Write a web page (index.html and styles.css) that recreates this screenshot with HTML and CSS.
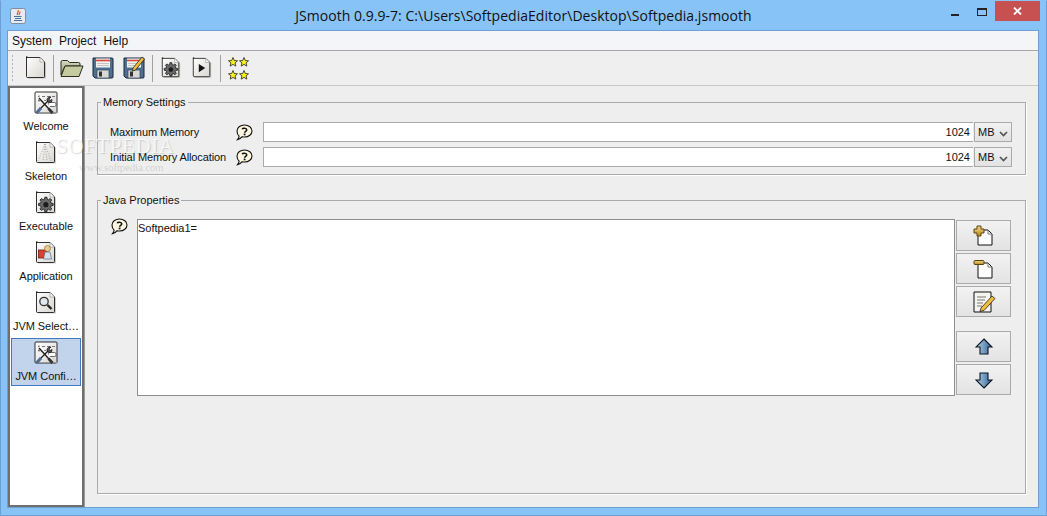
FILE: index.html
```html
<!DOCTYPE html>
<html lang="en">
<head>
<meta charset="utf-8">
<title>JSmooth</title>
<link rel="stylesheet" href="styles.css">
</head>
<body>
<svg class="defs" aria-hidden="true">
  <defs>
    <linearGradient id="paper" x1="0" y1="0" x2="1" y2="1"><stop offset="0" stop-color="#ffffff"/><stop offset="1" stop-color="#d8d6d0"/></linearGradient>
    <linearGradient id="steel" x1="0" y1="0" x2="1" y2="0"><stop offset="0" stop-color="#b9d2e8"/><stop offset="1" stop-color="#2f6399"/></linearGradient>
    <linearGradient id="gold" x1="0" y1="0" x2="0" y2="1"><stop offset="0" stop-color="#f3d98a"/><stop offset="1" stop-color="#b98a1e"/></linearGradient>
    <linearGradient id="folder" x1="0" y1="0" x2="0" y2="1"><stop offset="0" stop-color="#d8dcc0"/><stop offset="1" stop-color="#8f9670"/></linearGradient>
    <symbol id="doc" viewBox="0 0 24 24">
      <path d="M4 3h14l4 4v15.500H4z" fill="#00000030"/>
      <path d="M2.500 1.500h13.500l4.500 4.500v14.500q0 1-1 1h-16q-1 0-1-1v-19.500q0-.5.500-.5z" fill="url(#paper)" stroke="#1a1a1a" stroke-width=".9"/>
      <path d="M16 1.500v4.500h4.500z" fill="#fff" stroke="#888" stroke-width=".6"/>
    </symbol>
    <symbol id="tools" viewBox="0 0 24 24">
      <path d="M2 1h20q1 0 1 1v19q0 1-1 1H2q-1 0-1-1V2q0-1 1-1z" fill="url(#paper)" stroke="#1a1a1a" stroke-width=".9"/>
      <path d="M3 21.500h21" stroke="#999"/>
      <circle cx="5" cy="5.500" r="1" fill="#666"/>
      <path d="M8 5.500h3M13 5.500h3M18 5.500h3" stroke="#777"/>
      <circle cx="5" cy="9.500" r="1" fill="#666"/>
      <path d="M8 9.500h6" stroke="#777"/>
      <rect x="14" y="11.500" width="8" height="4" rx="1.500" fill="#fff" stroke="#444" stroke-width=".8"/>
      <path d="M3 21L16 8" stroke="#fff" stroke-width="3"/>
      <path d="M5 6l12 13" stroke="#fff" stroke-width="3"/>
      <path d="M6 18L15 9" stroke="#222" stroke-width="1.500"/>
      <path d="M5 7l10 11" stroke="#222" stroke-width="1.500"/>
      <path d="M2.500 22l4.500-5" stroke="#4a6f96" stroke-width="3.200"/>
      <path d="M13 8.500c.5-2 2.500-3 4-2.500l-2 2 1 1.500 2-1c.4 2-1.500 3.800-3.500 3z" fill="#555" stroke="#111" stroke-width=".7"/>
      <path d="M14.500 17.500l4 4.500" stroke="#333" stroke-width="2.800"/>
    </symbol>
    <symbol id="skeleton" viewBox="0 0 24 24">
      <use href="#doc"/>
      <path d="M11 3L4 20M11 3L9 20M11 3l2 17M11 3l6 17" stroke="#999" stroke-width=".8" stroke-dasharray="1 1.500" fill="none"/>
    </symbol>
    <symbol id="gear" viewBox="0 0 24 24">
      <use href="#doc"/>
      <g transform="translate(3.700 5.500) scale(.68)">
        <path d="M10.500 1h3l.5 3 2 .8 2.500-1.800 2.200 2.200-1.800 2.500.8 2 3 .5v3l-3 .5-.8 2 1.800 2.500-2.200 2.200-2.500-1.800-2 .8-.5 3h-3l-.5-3-2-.8-2.500 1.800-2.200-2.200 1.800-2.500-.8-2-3-.5v-3l3-.5.8-2-1.800-2.500 2.200-2.200 2.500 1.800 2-.8z" fill="#6a6a6a" stroke="#111" stroke-width="1.200"/>
        <circle cx="12" cy="12" r="3.800" fill="#1c1c1c"/>
      </g>
    </symbol>
    <symbol id="play" viewBox="0 0 24 24">
      <use href="#doc"/>
      <path d="M8.500 7.500l7 4.500-7 4.500z" fill="#111"/>
    </symbol>
    <symbol id="app" viewBox="0 0 24 24">
      <use href="#doc"/>
      <rect x="4.500" y="9" width="8" height="8" fill="#d8402f" stroke="#7a1a10" stroke-width=".8"/>
      <circle cx="13.500" cy="7.500" r="3" fill="#eec98a" stroke="#7a5a20" stroke-width=".6"/>
      <path d="M9.500 18l1.500-7h5l1.500 7z" fill="#d9dfe9" stroke="#46597c" stroke-width=".6"/>
    </symbol>
    <symbol id="search" viewBox="0 0 24 24">
      <use href="#doc"/>
      <circle cx="10" cy="10.500" r="4.200" fill="#dfe8ee" stroke="#333" stroke-width="1.300"/>
      <path d="M13.500 14l4 4" stroke="#222" stroke-width="2.400"/>
    </symbol>
    <symbol id="floppy" viewBox="0 0 22 22">
      <path d="M1 1h19q1 0 1 1v18q0 1-1 1H3l-2-2z" fill="#4c6f92" stroke="#16283a"/>
      <rect x="4" y="1.500" width="14" height="9" fill="#f3f1ec"/>
      <path d="M4 3.500h14" stroke="#d34a3c" stroke-width="1.600"/>
      <path d="M5 6.500h12M5 8.500h12" stroke="#c3c3c3"/>
      <rect x="5" y="13" width="12" height="8" fill="#d8d8d4" stroke="#33475a" stroke-width=".7"/>
      <rect x="7" y="14.500" width="3" height="5" fill="#333"/>
    </symbol>
    <symbol id="speech" viewBox="0 0 17 17">
      <path d="M8.500 1c4.300 0 7.500 2.600 7.500 6s-3.200 6-7.500 6c-.8 0-1.600-.1-2.300-.3-1 1.300-2.600 2.500-4.700 3 .9-1.100 1.500-2.300 1.600-3.600C1.700 10.900 1 9.100 1 7c0-3.400 3.200-6 7.500-6z" fill="#fdf6e0" stroke="#111" stroke-width="1.100"/>
      <path d="M6.200 5.200c.4-1.300 4.400-1.400 4.600.6.100 1.400-2.200 1.500-2.200 2.900" fill="none" stroke="#111" stroke-width="1.500"/>
      <rect x="7.700" y="9.600" width="1.800" height="1.700" fill="#111"/>
    </symbol>
    <symbol id="star" viewBox="0 0 10 10">
      <path d="M5 .5l1.300 3 3.200.3-2.400 2.100.7 3.200L5 7.400 2.200 9.100l.7-3.200L.5 3.800l3.200-.3z" fill="#f6f01e" stroke="#222" stroke-width=".8"/>
    </symbol>
  </defs>
</svg>

<div class="window">
  <header class="titlebar">
    <div class="app-icon">
      <svg width="16" height="16" viewBox="0 0 16 16"><rect x=".5" y=".5" width="15" height="15" rx="2" fill="#e6ebf3" stroke="#7d8ca3"/><path d="M8 2c1.500 2-2 3-.5 5M10 3.500c.5 1.500-1.500 2-.7 3.500" fill="none" stroke="#d8552a" stroke-width="1.200"/><path d="M4 8.500h7.500M5 10.500h6M4 12.500h8" stroke="#4a6f96" stroke-width="1.100"/></svg>
    </div>
    <div class="title-text">JSmooth 0.9.9-7: C:\Users\SoftpediaEditor\Desktop\Softpedia.jsmooth</div>
    <div class="caption">
      <div class="cap-btn"><span class="cap-min"></span></div>
      <div class="cap-btn"><span class="cap-max"></span></div>
      <div class="cap-close">
        <svg width="9" height="8" viewBox="0 0 9 8"><path d="M1 .5l7 7M8 .5l-7 7" stroke="#fff" stroke-width="1.800"/></svg>
      </div>
    </div>
  </header>

  <div class="client">
    <nav class="menubar">
      <span class="menu-item">System</span>
      <span class="menu-item">Project</span>
      <span class="menu-item">Help</span>
    </nav>

    <div class="toolbar">
      <div class="grip"></div>
      <svg class="tool tool-new" width="24" height="24"><use href="#doc"/></svg>
      <div class="tsep tsep-a"></div>
      <svg class="tool tool-folder" width="24" height="20" viewBox="0 0 24 20">
        <path d="M1 17V4q0-1.500 1.500-1.500h5l2 2h9q1.500 0 1.500 1.500v2H5z" fill="url(#folder)" stroke="#2c2e1e"/>
        <path d="M1 18.500L5 8h18l-4 10.500z" fill="#c5cb9f" stroke="#2c2e1e"/>
      </svg>
      <svg class="tool tool-save" width="22" height="22"><use href="#floppy"/></svg>
      <svg class="tool tool-saveas" width="22" height="24" viewBox="0 0 22 24">
        <use href="#floppy" y="2" width="22" height="22"/>
        <path d="M10 13l9-11 2.500 2-9 11-3 1z" fill="#eebd3c" stroke="#222" stroke-width=".8"/>
      </svg>
      <div class="tsep tsep-b"></div>
      <svg class="tool tool-gear" width="22" height="24"><use href="#gear"/></svg>
      <svg class="tool tool-play" width="22" height="24"><use href="#play"/></svg>
      <div class="tsep tsep-c"></div>
      <div class="stars">
        <svg width="10" height="10"><use href="#star"/></svg>
        <svg width="10" height="10"><use href="#star"/></svg>
        <svg width="10" height="10"><use href="#star"/></svg>
        <svg width="10" height="10"><use href="#star"/></svg>
      </div>
    </div>

    <div class="body">
      <aside class="sidebar">
        <div class="side-item"><svg width="24" height="24"><use href="#tools"/></svg><span>Welcome</span></div>
        <div class="side-item"><svg width="24" height="24"><use href="#skeleton"/></svg><span>Skeleton</span></div>
        <div class="side-item"><svg width="24" height="24"><use href="#gear"/></svg><span>Executable</span></div>
        <div class="side-item"><svg width="24" height="24"><use href="#app"/></svg><span>Application</span></div>
        <div class="side-item"><svg width="24" height="24"><use href="#search"/></svg><span>JVM Select…</span></div>
        <div class="side-item selected"><svg width="24" height="24"><use href="#tools"/></svg><span>JVM Confi…</span></div>
      </aside>

      <main class="main">
        <fieldset class="group group-mem">
          <legend>Memory Settings</legend>
          <div class="mem-grid">
            <span class="mem-label">Maximum Memory</span>
            <svg class="help" width="17" height="17"><use href="#speech"/></svg>
            <div class="field">1024</div>
            <div class="combo"><span>MB</span><svg width="9" height="6" viewBox="0 0 9 6"><path d="M1 1l3.500 3.500L8 1" fill="none" stroke="#555" stroke-width="1.700"/></svg></div>
            <span class="mem-label">Initial Memory Allocation</span>
            <svg class="help" width="17" height="17"><use href="#speech"/></svg>
            <div class="field">1024</div>
            <div class="combo"><span>MB</span><svg width="9" height="6" viewBox="0 0 9 6"><path d="M1 1l3.500 3.500L8 1" fill="none" stroke="#555" stroke-width="1.700"/></svg></div>
          </div>
        </fieldset>

        <fieldset class="group group-java">
          <legend>Java Properties</legend>
          <div class="java-row">
            <svg class="help" width="17" height="17"><use href="#speech"/></svg>
            <div class="prop-list">Softpedia1=</div>
            <div class="btn-col">
              <button class="icon-btn" type="button">
                <svg width="22" height="22" viewBox="0 0 22 22"><path d="M5 5h10l4 4v11H5z" fill="#fff" stroke="#111"/><path d="M15 5v4h4" fill="none" stroke="#777"/><path d="M4 1h4v3h3v4H8v3H4V8H1V4h3z" fill="url(#gold)" stroke="#5c4208"/></svg>
              </button>
              <button class="icon-btn" type="button">
                <svg width="22" height="22" viewBox="0 0 22 22"><path d="M5 5h10l4 4v11H5z" fill="#fff" stroke="#111"/><path d="M15 5v4h4" fill="none" stroke="#777"/><rect x="1" y="2.500" width="10" height="4" rx="1" fill="url(#gold)" stroke="#5c4208"/></svg>
              </button>
              <button class="icon-btn" type="button">
                <svg width="24" height="24" viewBox="0 0 24 24"><path d="M2 2h17v20H2z" fill="#f5f4ef" stroke="#111"/><path d="M5 7h9M5 10h8M5 13h6M5 16h5" stroke="#777"/><path d="M9 18l11-12 3 2.500-11 12-4 1z" fill="#eebd3c" stroke="#222" stroke-width=".8"/></svg>
              </button>
              <button class="icon-btn btn-gap" type="button">
                <svg width="18" height="18" viewBox="0 0 18 18"><path d="M9 1l8 8h-4v7H5V9H1z" fill="url(#steel)" stroke="#0b1724" stroke-width="1.100"/></svg>
              </button>
              <button class="icon-btn" type="button">
                <svg width="18" height="18" viewBox="0 0 18 18"><path d="M9 17l8-8h-4V2H5v7H1z" fill="url(#steel)" stroke="#0b1724" stroke-width="1.100"/></svg>
              </button>
            </div>
          </div>
        </fieldset>
      </main>
    </div>

    <div class="wm wm-main">SOFTPEDIA</div>
    <div class="wm wm-url">www.softpedia.com</div>
  </div>
</div>
</body>
</html>
```

FILE: styles.css
```css
* { box-sizing: border-box; }
html, body { margin: 0; padding: 0; height: 516px; overflow: hidden; }
body { font-family: "Liberation Sans", Arial, sans-serif; font-size: 11px; color: #111; background: #88c3f8; }
.defs { position: absolute; width: 0; height: 0; }

.window { width: 1047px; height: 516px; display: flex; flex-direction: column; background: #88c3f8; border: 1px solid #6d9fd3; border-top-color: #88c3f8; padding: 0 7px 7px 6px; }
.titlebar { height: 29px; flex: none; display: flex; align-items: center; position: relative; }
.app-icon { width: 16px; height: 16px; margin-left: 3px; display: flex; }
.title-text { flex: 1; text-align: center; font-family: "Open Sans", sans-serif; font-size: 14px; letter-spacing: .03px; color: #111; padding: 0 0 1px 79px; }
.caption { display: flex; align-items: flex-start; align-self: flex-start; margin-right: -1px; }
.cap-btn { width: 26px; height: 20px; display: flex; align-items: center; justify-content: center; }
.cap-btn + .cap-btn { margin-left: 1px; }
.cap-min { width: 8px; height: 2px; background: #222; margin-top: 7px; }
.cap-max { width: 10px; height: 8px; border: 1px solid #222; border-top-width: 2px; margin-top: 1px; }
.cap-close { width: 45px; height: 20px; background: #c75050; display: flex; align-items: center; justify-content: center; }

.client { flex: 1; display: flex; flex-direction: column; background: #eee; border: 1px solid #6d9fd3; position: relative; min-height: 0; }
.menubar { height: 20px; flex: none; display: flex; align-items: center; gap: 7px; padding: 0 0 0 4px; background: #f4f5f8; border-bottom: 1px solid #a6a6a6; font-size: 12px; }
.menu-item { color: #111; }
.toolbar { height: 35px; flex: none; display: flex; align-items: center; padding-left: 3px; background: #efefef; border-bottom: 1px solid #c8c8c8; }
.grip { width: 3px; height: 28px; margin-right: 10px; background-image: radial-gradient(circle, #b3b3b3 1px, transparent 1.100px); background-size: 3px 4px; }
.tool { flex: none; display: block; }
.tsep { width: 1px; height: 27px; background: #a0a0a0; flex: none; }
.tsep-a { margin: 0 6px 0 5px; }
.tsep-b { margin: 0 7px 0 7px; }
.tsep-c { margin: 0 7px 0 7px; }
.tool-save { margin-left: 8px; }
.tool-saveas { margin-left: 9px; margin-top: -2px; }
.tool-play { margin-left: 9px; }
.stars { display: grid; grid-template-columns: 10px 10px; row-gap: 3px; column-gap: 1px; }

.body { flex: 1; display: flex; min-height: 0; }
.sidebar { width: 76px; flex: none; background: #fff; border: 2px solid #6f6f6f; padding: 0 1px; display: flex; flex-direction: column; gap: 2px; }
.side-item { height: 48px; flex: none; display: flex; flex-direction: column; align-items: center; padding-top: 2px; border: 1px solid transparent; }
.side-item svg { flex: none; }
.side-item span { margin-top: 5px; line-height: 13px; white-space: nowrap; letter-spacing: -.05px; }
.side-item.selected { background: #c2d3ec; border-color: #3f78c6; }

.main { flex: 1; min-width: 0; display: flex; flex-direction: column; padding: 10px 12px 13px 12px; background: #eee; border-left: 1px solid #9a9a9a; }
.group { margin: 0; padding: 0 13px 7px 12px; border: 1px solid #aaa; box-shadow: 1px 1px 0 #fff; min-width: 0; }
.group legend { padding: 0 2px; line-height: 13px; font-size: 11px; color: #111; }
.group-mem { flex: none; margin-bottom: 19px; padding-top: 13px; }
.group-mem legend { margin-left: -9px; }
.group-java { flex: 1; padding: 12px 13px 7px 13px; min-height: 0; }
.group-java legend { margin-left: -10px; }
.mem-grid { display: grid; grid-template-columns: 127px 26px 1fr 39px; grid-auto-rows: 20px; row-gap: 5px; align-items: center; }
.mem-label { white-space: nowrap; letter-spacing: -.1px; }
.help { display: block; margin-left: -1px; }
.field { height: 20px; background: #fff; border: 1px solid #aaa; border-right: 0; text-align: right; line-height: 18px; padding-right: 3px; }
.combo { height: 20px; display: flex; align-items: center; justify-content: space-between; padding: 0 3px; background: linear-gradient(#f1f1f1, #e2e2e2); border: 1px solid #aaa; margin-left: 1px; }
.combo svg { margin-top: 3px; }
.java-row { display: flex; align-items: flex-start; }
.java-row .help { margin: -1px 9px 0 0; flex: none; }
.prop-list { flex: none; width: 818px; height: 177px; background: #fff; border: 1px solid #8e8e8e; padding: 2px 0; line-height: 13px; }
.btn-col { display: flex; flex-direction: column; gap: 2px; margin-left: 1px; margin-top: 1px; }
.icon-btn { width: 55px; height: 31px; padding: 0; display: flex; align-items: center; justify-content: center; background: linear-gradient(#f2f2f2, #e3e3e3); border: 1px solid #aaa; border-radius: 0; }
.btn-gap { margin-top: 12px; }

.wm { position: absolute; pointer-events: none; white-space: nowrap; font-family: "Liberation Serif", serif; }
.wm-main { left: 48px; top: 103px; font-size: 21px; letter-spacing: .6px; color: rgba(255,255,255,.75); text-shadow: 1px 1px 1px rgba(120,120,120,.3); }
.wm-url { left: 71px; top: 130px; font-size: 11px; letter-spacing: -.2px; color: rgba(120,120,120,.25); }
```
